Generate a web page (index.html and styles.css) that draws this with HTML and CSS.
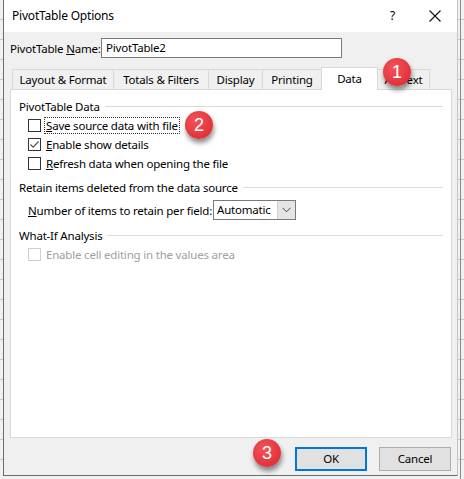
FILE: index.html
```html
<!DOCTYPE html>
<html>
<head>
<meta charset="utf-8">
<link rel="stylesheet" href="styles.css">
</head>
<body>
<div class="sheet">
  <div class="dialog">
    <div class="titlebar">
      <span class="title">PivotTable Options</span>
      <span class="help">?</span>
      <svg class="close" width="12" height="12" viewBox="0 0 12 12"><path d="M0.5 0.5 L11.5 11.5 M11.5 0.5 L0.5 11.5" stroke="#111" stroke-width="1.1" fill="none"/></svg>
    </div>
    <div class="body">
      <div class="namerow">
        <span class="namelabel">PivotTable <u>N</u>ame:</span>
        <div class="input">PivotTable2</div>
      </div>
      <div class="tabs">
        <div class="tab t1">Layout &amp; Format</div>
        <div class="tab t2">Totals &amp; Filters</div>
        <div class="tab t3">Display</div>
        <div class="tab t4">Printing</div>
        <div class="tab active">Data</div>
        <div class="tab t6">Alt Text</div>
      </div>
      <div class="panel">
        <div class="group"><span>PivotTable Data</span><i></i></div>
        <div class="check first"><span class="box"></span><span class="focus"><u>S</u>ave source data with file</span></div>
        <div class="check"><span class="box checked"><svg width="11" height="11" viewBox="0 0 11 11"><path d="M1.5 5.5 L4.2 8.2 L9.5 2.5" stroke="#555" stroke-width="1.2" fill="none"/></svg></span><span class="lbl"><u>E</u>nable show details</span></div>
        <div class="check"><span class="box"></span><span class="lbl"><u>R</u>efresh data when opening the file</span></div>
        <div class="group g2"><span>Retain items deleted from the data source</span><i></i></div>
        <div class="retain">
          <span class="rlabel"><u>N</u>umber of items to retain per field:</span>
          <div class="select"><span class="val">Automatic</span><span class="drop"><svg width="9" height="6" viewBox="0 0 9 6"><path d="M0.5 0.8 L4.5 4.8 L8.5 0.8" stroke="#444" stroke-width="1" fill="none"/></svg></span></div>
        </div>
        <div class="group g3"><span>What-If Analysis</span><i></i></div>
        <div class="check disabled"><span class="box"></span><span class="lbl">Enable cell editing in the values area</span></div>
      </div>
      <div class="buttons">
        <div class="btn ok">OK</div>
        <div class="btn">Cancel</div>
      </div>
    </div>
    <div class="badge b1">1</div>
    <div class="badge b2">2</div>
    <div class="badge b3">3</div>
  </div>
</div>
</body>
</html>
```
FILE: styles.css
```css
html, body {
  margin: 0;
  padding: 0;
}
body {
  width: 464px;
  height: 479px;
  overflow: hidden;
  font-family: "Noto Sans", "Open Sans", sans-serif;
  font-size: 11.5px;
  letter-spacing: -0.2px;
  color: #000;
  background: #fff;
  white-space: nowrap;
}
.sheet {
  height: 479px;
  padding-left: 3px;
  box-sizing: border-box;
  background:
    linear-gradient(to right, transparent 460px, #8a8a8a 460px, #8a8a8a 461px, transparent 461px),
    repeating-linear-gradient(to bottom, transparent 0, transparent 19px, #c8c8c8 19px, #c8c8c8 20px),
    #f2f2f2;
}
.dialog {
  position: relative;
  width: 455px;
  height: 476px;
  box-sizing: border-box;
  background: #f0f0f0;
  border-left: 1px solid #6b6b6b;
  border-bottom: 1px solid #6b6b6b;
  border-right: 1px solid #c4c4c4;
  display: flex;
  flex-direction: column;
}
.titlebar {
  height: 32px;
  background: #fff;
  display: flex;
  align-items: center;
  padding-left: 8px;
  flex-shrink: 0;
}
.title {
  flex: 1;
  font-size: 12px;
  margin-top: -1px;
}
.help {
  font-size: 12px;
  margin-right: 34px;
  margin-top: -1px;
}
.close {
  margin-right: 16px;
}
.body {
  flex: 1;
  display: flex;
  flex-direction: column;
  padding: 6px 5px 0 6px;
}
.namerow {
  display: flex;
  align-items: center;
  height: 20px;
}
.namelabel {
  width: 91px;
}
.input {
  width: 241px;
  height: 20px;
  box-sizing: border-box;
  background: #fff;
  border: 1px solid #7a7a7a;
  padding: 1px 0 0 4px;
  line-height: 16px;
}
.tabs {
  display: flex;
  align-items: flex-end;
  margin-top: 9px;
  margin-left: 2px;
  height: 22px;
  position: relative;
  z-index: 1;
}
.tab {
  height: 20px;
  box-sizing: border-box;
  border: 1px solid #d9d9d9;
  border-bottom: none;
  margin-right: -1px;
  line-height: 19px;
  text-align: center;
  background: #f0f0f0;
}
.t1 { width: 102px; }
.t2 { width: 96px; }
.t3 { width: 55px; }
.t4 { width: 60px; }
.t6 { width: 53px; }
.tab.active {
  width: 57px;
  height: 23px;
  background: #fff;
  margin-bottom: -1px;
  line-height: 21px;
}
.panel {
  width: 442px;
  height: 349px;
  box-sizing: border-box;
  background: #fff;
  border: 1px solid #d9d9d9;
  padding: 8px 8px 0 8px;
}
.group {
  display: flex;
  align-items: center;
  height: 16px;
}
.group i {
  flex: 1;
  height: 1px;
  background: #dadada;
  margin-left: 5px;
  margin-top: 1px;
}
.g2 { margin-top: 6px; }
.g3 { margin-top: 7px; }
.check {
  display: flex;
  align-items: center;
  height: 19px;
  padding-left: 9px;
}
.check.first { margin-top: 2px; }
.box {
  width: 13px;
  height: 13px;
  box-sizing: border-box;
  border: 1px solid #333;
  background: #fff;
  margin-right: 4px;
  display: flex;
  align-items: center;
  justify-content: center;
}
.lbl {
  padding: 0 1px;
}
.focus {
  padding: 0 1px;
  outline: 1px dotted #333;
  outline-offset: 0;
  line-height: 15px;
}
.disabled { color: #a0a0a0; margin-top: 2px; }
.disabled .box { border-color: #cfcfcf; }
.retain {
  display: flex;
  align-items: center;
  padding-left: 9px;
  margin-top: 5px;
  height: 20px;
}
.rlabel {
  width: 185px;
}
.select {
  display: flex;
  width: 83px;
  height: 20px;
  box-sizing: border-box;
  border: 1px solid #7a7a7a;
  background: #fff;
}
.select .val {
  flex: 1;
  padding-left: 3px;
  line-height: 17px;
}
.drop {
  width: 17px;
  background: #e5e5e5;
  border-left: 1px solid #cfcfcf;
  display: flex;
  align-items: center;
  justify-content: center;
}
.buttons {
  display: flex;
  justify-content: flex-end;
  gap: 12px;
  margin-top: 9px;
  margin-right: 1px;
}
.btn {
  width: 72px;
  height: 24px;
  box-sizing: border-box;
  border: 1px solid #adadad;
  background: #e1e1e1;
  text-align: center;
  line-height: 21px;
}
.btn.ok {
  border: 2px solid #0078d7;
  line-height: 19px;
}
.badge {
  position: absolute;
  z-index: 5;
  width: 28px;
  height: 28px;
  border-radius: 50%;
  background: radial-gradient(circle at 40% 35%, #f2545b 0%, #e2323a 70%, #d02a31 100%);
  color: #fff;
  font-family: "Liberation Sans", Arial, sans-serif;
  font-size: 18px;
  letter-spacing: 0;
  line-height: 28px;
  text-align: center;
  box-shadow: 1px 4px 5px rgba(0,0,0,0.45);
}
.b1 { left: 379px; top: 58px; }
.b2 { left: 181px; top: 111px; }
.b3 { left: 249px; top: 439px; }
```
